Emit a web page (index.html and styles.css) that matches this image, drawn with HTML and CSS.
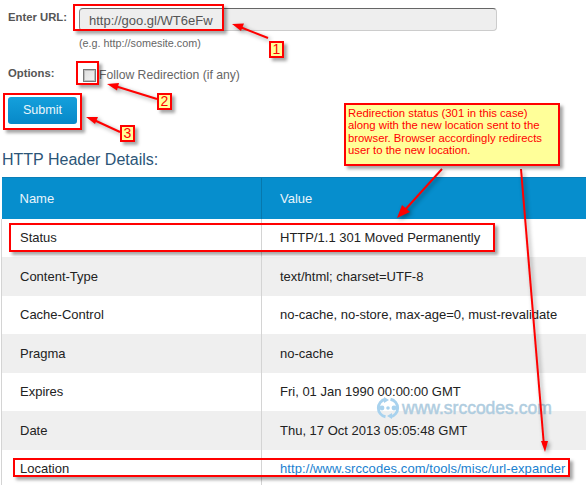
FILE: index.html
```html
<!DOCTYPE html>
<html lang="en">
<head>
<meta charset="utf-8">
<title>URL Expander</title>
<link rel="stylesheet" href="styles.css">
</head>
<body>
<main class="page">
  <form class="form">
    <label class="form-label" for="url">Enter URL:</label>
    <div class="url-field">
      <input class="url-input" id="url" type="text" value="http://goo.gl/WT6eFw">
      <div class="hint">(e.g. http://somesite.com)</div>
    </div>
    <div class="form-label options-label">Options:</div>
    <label class="option"><span class="checkbox"></span>Follow Redirection (if any)</label>
    <button class="submit" type="button">Submit</button>
  </form>
  <h2 class="heading">HTTP Header Details:</h2>
  <table class="details">
    <thead><tr><th>Name</th><th>Value</th></tr></thead>
    <tbody>
      <tr><td>Status</td><td>HTTP/1.1 301 Moved Permanently</td></tr>
      <tr><td>Content-Type</td><td>text/html; charset=UTF-8</td></tr>
      <tr><td>Cache-Control</td><td>no-cache, no-store, max-age=0, must-revalidate</td></tr>
      <tr><td>Pragma</td><td>no-cache</td></tr>
      <tr><td>Expires</td><td>Fri, 01 Jan 1990 00:00:00 GMT</td></tr>
      <tr><td>Date</td><td>Thu, 17 Oct 2013 05:05:48 GMT</td></tr>
      <tr><td>Location</td><td><a class="location-link" href="#">http://www.srccodes.com/tools/misc/url-expander</a></td></tr>
    </tbody>
  </table>

  <div class="watermark">
    <svg class="wm-logo" width="26" height="22" viewBox="0 0 26 22" aria-hidden="true">
      <path class="wm-arc" d="M10.500 2.200A9 9 0 0 0 10.500 19.800"/>
      <path class="wm-arc" d="M15.500 2.200A9 9 0 0 1 15.500 19.800"/>
      <path class="wm-tip" d="M9 0L14 3L9 6ZM17 16L12 19L17 22Z"/>
      <circle class="wm-dot" cx="7" cy="11" r="2.400"/><circle class="wm-dot" cx="13" cy="11" r="1.800"/><circle class="wm-dot" cx="19" cy="11" r="2.400"/>
    </svg>
    <span>www.srccodes.com</span>
  </div>

  <svg class="arrows" width="586" height="485" viewBox="0 0 586 485" aria-hidden="true">
    <g class="arrow-group">
      <path class="shaft" d="M268 38L240 27"/><path class="head" d="M232 24L244 23.500L241 31Z"/>
      <path class="shaft" d="M157 99L115 86"/><path class="head" d="M107 84L119 83L117 90.500Z"/>
      <path class="shaft" d="M120 132L94 120"/><path class="head" d="M86 117L98 117L95 124Z"/>
      <path class="shaft" d="M442 169L404 211"/><path class="head" d="M397 218L402 205L410 212Z"/>
      <path class="shaft" d="M521 169L544 446"/><path class="head" d="M545 452L541 441L548 441Z"/>
    </g>
  </svg>

  <div class="mark mark-url"></div>
  <div class="mark mark-check"></div>
  <div class="mark mark-submit"></div>
  <div class="mark mark-status"></div>
  <div class="mark mark-location"></div>
  <div class="badge badge-1">1</div>
  <div class="badge badge-2">2</div>
  <div class="badge badge-3">3</div>
  <div class="note">Redirection status (301 in this case) along with the new location sent to the browser. Browser accordingly redirects user to the new location.</div>
</main>
</body>
</html>
```
FILE: styles.css
```css
* { box-sizing: border-box; }
html, body { margin: 0; background: #fff; }
body { font-family: "Liberation Sans", Arial, sans-serif; overflow: hidden; }
.page { position: relative; width: 586px; height: 485px; overflow: hidden; }

.form { display: grid; grid-template-columns: 79px 418px; padding: 8px 0 0 0; }
.form-label { font-size: 11.300px; font-weight: bold; color: #555; padding: 3px 0 0 8px; }
.options-label { padding-top: 2px; }
.url-input {
  display: block; width: 418px; height: 23px; padding: 2px 9px 0;
  font: 13px "Liberation Sans", Arial, sans-serif; color: #555;
  background: #eee; border: 1px solid #ccc; border-top-color: #666; border-left-color: #888; border-radius: 4px;
}
.hint { font-size: 10.800px; color: #666; line-height: 12px; padding-top: 6px; }
.url-field { height: 57px; }
.option { display: flex; align-items: center; height: 20px; padding: 0 0 0 4px; font-size: 12.200px; color: #666; }
.checkbox { width: 13px; height: 13px; margin-right: 3px; border: 1px solid #777; background: linear-gradient(135deg, #ddd, #f4f4f4); box-shadow: inset 0 0 0 1px #bbb; }
.submit {
  grid-column: 1 / 3; width: 69px; height: 27px; margin: 12px 0 0 8px; padding: 0 0 2px; border: 0; border-radius: 3px;
  font: 12.600px "Liberation Sans", Arial, sans-serif; color: #eaf6fc;
  background: linear-gradient(#14a0dc, #0788c8);
}
.heading { margin: 27px 0 0 2px; font-size: 16px; font-weight: normal; line-height: 18px; color: #2b5577; }

.details { border-collapse: collapse; table-layout: fixed; width: 585px; margin: 8px 0 0 1px; font-size: 13px; color: #222; }
.details th:first-child, .details td:first-child { width: 260px; }
.details th { height: 41px; padding: 0 0 0 18px; text-align: left; font-weight: normal; color: #e8f4fb; background: #068ecd; border-top: 1px solid #0a7fb8; }
.details th + th { border-left: 1px solid #0678ad; }
.details td { height: 38.500px; padding: 0 0 0 18px; border-left: 1px solid #d4d4d4; }
.details tbody tr:nth-child(even) td { background: #efefef; }
.details a { color: #1a7fd0; text-decoration: none; }
.location-link { letter-spacing: .08px; }

.watermark { position: absolute; left: 375px; top: 397px; display: flex; align-items: center; gap: 1px; font-size: 17.500px; color: #b0cde0; -webkit-text-stroke: .5px #b0cde0; line-height: 22px; }
.wm-arc { fill: none; stroke: #a8d2ee; stroke-width: 3; }
.wm-tip, .wm-dot { fill: #a8d2ee; }
.arrows { position: absolute; left: 0; top: 0; }
.arrow-group { filter: drop-shadow(2px 2px 2px rgba(0,0,0,.4)); }
.shaft { stroke: #f00; stroke-width: 2; fill: none; }
.head { fill: #f00; }

.mark { position: absolute; border: 2px solid #f00; box-shadow: 3px 3px 3px rgba(0,0,0,.35); }
.mark-url { left: 73px; top: 4px; width: 151px; height: 27px; }
.mark-check { left: 76px; top: 61px; width: 23px; height: 24px; }
.mark-submit { left: 3px; top: 93px; width: 79px; height: 37px; }
.mark-status { left: 9px; top: 223px; width: 486px; height: 29px; }
.mark-location { left: 13px; top: 458px; width: 557px; height: 19px; }

.badge { position: absolute; width: 15px; height: 17px; border: 2px solid #f00; background: #ffff99; color: #f00; font-size: 14px; line-height: 13px; text-align: center; box-shadow: 3px 3px 3px rgba(0,0,0,.35); }
.badge-1 { left: 269px; top: 41px; }
.badge-2 { left: 157px; top: 93px; }
.badge-3 { left: 120px; top: 125px; }
.note { position: absolute; left: 344px; top: 103px; width: 216px; height: 63px; padding: 2px 2px 0 2px; border: 2px solid #f00; background: #ffff99; color: #f00; font-size: 11.300px; line-height: 12.300px; box-shadow: 3px 3px 3px rgba(0,0,0,.35); }
```
